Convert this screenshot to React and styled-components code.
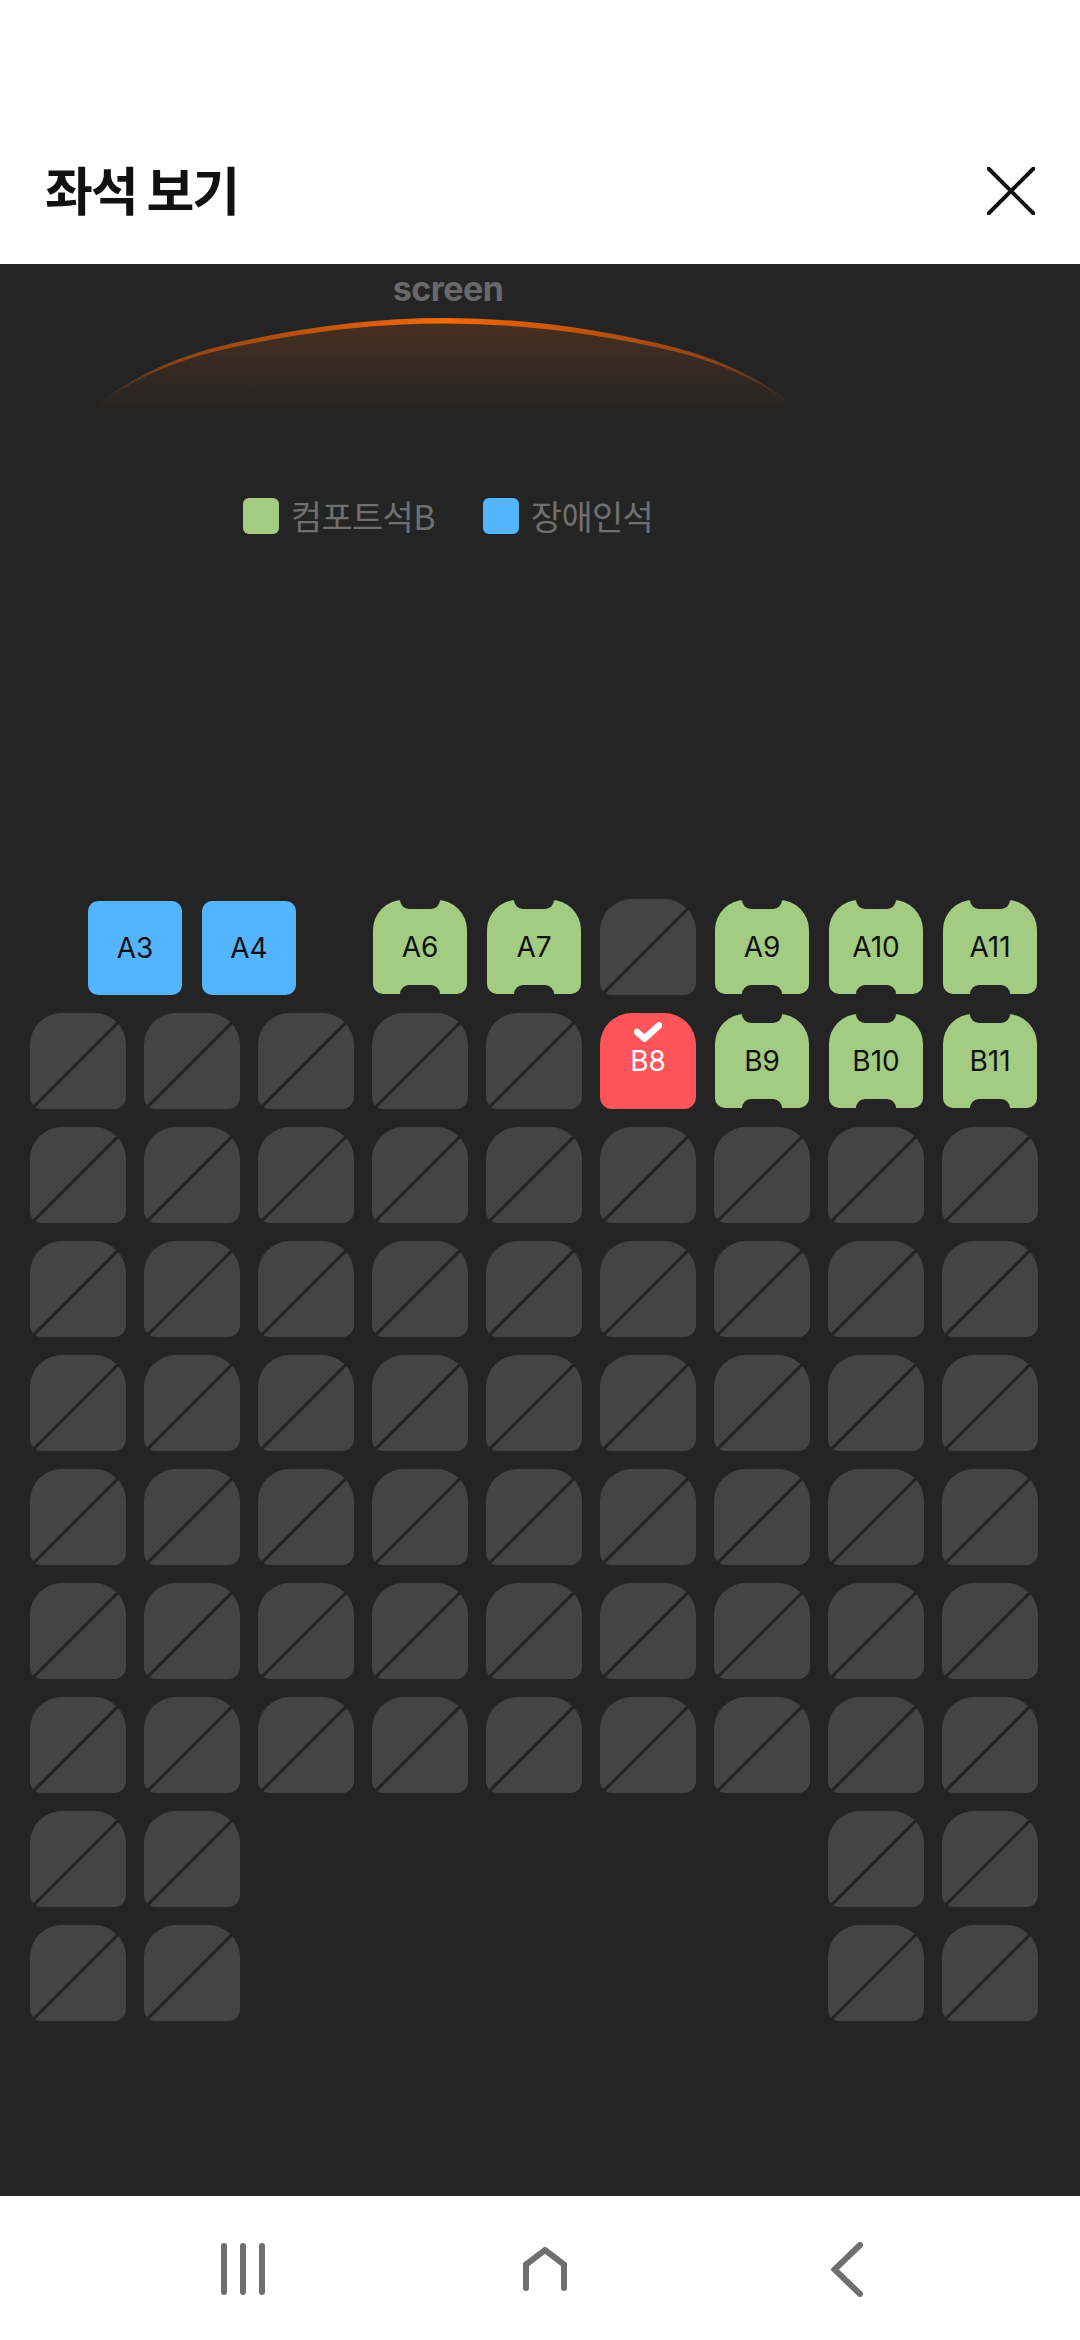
import styled, { createGlobalStyle } from 'styled-components';

const GlobalStyle = createGlobalStyle`
  html, body {
    margin: 0;
    padding: 0;
    background: #fff;
  }
  * {
    box-sizing: border-box;
  }
`;

const BG = '#242424';

const seatRows = [
  ['gap', 'b:A3', 'b:A4', 'gap', 'g:A6', 'g:A7', 'x', 'g:A9', 'g:A10', 'g:A11'],
  ['x', 'x', 'x', 'x', 'x', 'r:B8', 'g:B9', 'g:B10', 'g:B11'],
  Array(9).fill('x'),
  Array(9).fill('x'),
  Array(9).fill('x'),
  Array(9).fill('x'),
  Array(9).fill('x'),
  Array(9).fill('x'),
  ['x', 'x', 'none', 'none', 'none', 'none', 'none', 'x', 'x'],
  ['x', 'x', 'none', 'none', 'none', 'none', 'none', 'x', 'x'],
];

function Seat({ code }) {
  if (code === 'gap') return <HalfGap />;
  if (code === 'none') return <Slot />;
  if (code === 'x') {
    return (
      <Slot>
        <SoldSeat />
      </Slot>
    );
  }

  const [type, label] = code.split(':');

  return (
    <Slot>
      {type === 'b' && <AccessibleSeat>{label}</AccessibleSeat>}
      {type === 'g' && <ComfortSeat>{label}</ComfortSeat>}
      {type === 'r' && (
        <SelectedSeat>
          <CheckMark viewBox='0 0 28 20'>
            <path d='M3 10 L10.5 16.5 L25 3.5' />
          </CheckMark>
          {label}
        </SelectedSeat>
      )}
    </Slot>
  );
}

function App() {
  return (
    <Page>
      <GlobalStyle />
      <Header>
        <Title>좌석 보기</Title>
        <CloseIcon viewBox='0 0 48 48'>
          <path d='M1.5 1.5 L46.5 46.5 M46.5 1.5 L1.5 46.5' />
        </CloseIcon>
      </Header>

      <Hall>
        <Stage>
          <ScreenLabel>screen</ScreenLabel>
          <ScreenGlow viewBox='0 0 730 100'>
            <defs>
              <linearGradient id='arcStroke' x1='0' y1='0' x2='1' y2='0'>
                <stop offset='0' stopColor='#e8600a' stopOpacity='0.05' />
                <stop offset='0.1' stopColor='#e8600a' stopOpacity='0.45' />
                <stop offset='0.28' stopColor='#e8600a' stopOpacity='0.7' />
                <stop offset='0.5' stopColor='#f56a08' stopOpacity='1' />
                <stop offset='0.72' stopColor='#e8600a' stopOpacity='0.7' />
                <stop offset='0.9' stopColor='#e8600a' stopOpacity='0.45' />
                <stop offset='1' stopColor='#e8600a' stopOpacity='0.05' />
              </linearGradient>
              <linearGradient id='arcFill' x1='0' y1='0' x2='0' y2='1'>
                <stop offset='0' stopColor='#e8600a' stopOpacity='0.19' />
                <stop offset='1' stopColor='#e8600a' stopOpacity='0' />
              </linearGradient>
            </defs>
            <path d='M12 92 Q60 52 130 33 Q250 3 362 3 Q474 3 594 33 Q664 52 712 92 L712 99 L12 99 Z' fill='url(#arcFill)' />
            <GlowEdge
              d='M12 92 Q60 52 130 33 Q250 3 362 3 Q474 3 594 33 Q664 52 712 92 Q664 55 594 37 Q474 8.5 362 8.5 Q250 8.5 130 37 Q60 55 12 92 Z'
              fill='url(#arcStroke)'
            />
          </ScreenGlow>
          <Legend>
            <LegendItem>
              <Swatch $color='#a3cb82' />
              컴포트석B
            </LegendItem>
            <LegendItem>
              <Swatch $color='#54b5ff' />
              장애인석
            </LegendItem>
          </Legend>
        </Stage>

        <SeatMap>
          {seatRows.map((row, rowIndex) => (
            <SeatRow key={rowIndex}>
              {row.map((code, seatIndex) => (
                <Seat key={seatIndex} code={code} />
              ))}
            </SeatRow>
          ))}
        </SeatMap>
      </Hall>

      <NavBar>
        <NavIcon viewBox='0 0 44 52' $width={44} $height={52}>
          <path d='M3 3 V49 M22 3 V49 M41 3 V49' />
        </NavIcon>
        <NavIcon viewBox='0 0 44 44' $width={44} $height={44}>
          <path d='M3 41 V17.5 L22 3 L41 17.5 V41' />
        </NavIcon>
        <NavIcon viewBox='0 0 32 55' $width={32} $height={55}>
          <path d='M29 3 L3.5 27.5 L29 52' />
        </NavIcon>
      </NavBar>
    </Page>
  );
}

export default App;

const Page = styled.div`
  width: 1080px;
  height: 2340px;
  display: flex;
  flex-direction: column;
  overflow: hidden;
  background: #fff;
`;

const Header = styled.header`
  height: 264px;
  padding: 113px 45px 0 45px;
  display: flex;
  align-items: center;
  justify-content: space-between;
`;

const Title = styled.h1`
  margin: 0;
  font-family: 'Noto Sans CJK KR', 'Noto Sans', sans-serif;
  font-size: 52px;
  font-weight: 700;
  letter-spacing: -2px;
  color: #111;
`;

const CloseIcon = styled.svg`
  width: 48px;
  height: 48px;
  margin-top: 5px;
  stroke: #111;
  stroke-width: 4;
  stroke-linecap: round;
  fill: none;
`;

const Hall = styled.main`
  flex: 1;
  background: ${BG};
  display: flex;
  flex-direction: column;
`;

const Stage = styled.section`
  width: 896px;
  height: 635px;
  display: flex;
  flex-direction: column;
  align-items: center;
`;

const ScreenLabel = styled.div`
  margin-top: 7px;
  height: 36px;
  line-height: 36px;
  font-family: Inter, 'Noto Sans', sans-serif;
  font-size: 34px;
  font-weight: 700;
  letter-spacing: -0.5px;
  color: #686868;
`;

const ScreenGlow = styled.svg`
  margin-top: 8px;
  width: 730px;
  height: 100px;
`;

const GlowEdge = styled.path`
  filter: blur(0.7px);
`;

const Legend = styled.div`
  margin-top: 83px;
  display: flex;
  gap: 48px;
`;

const LegendItem = styled.div`
  display: flex;
  align-items: center;
  gap: 12px;
  height: 36px;
  margin-top: -1px;
  font-family: 'Noto Sans CJK KR', 'Noto Sans', sans-serif;
  font-size: 34px;
  letter-spacing: -0.7px;
  color: #6f6f6f;
`;

const Swatch = styled.span`
  width: 36px;
  height: 36px;
  border-radius: 6px;
  margin-top: 2px;
  background: ${({ $color }) => $color};
`;

const SeatMap = styled.section`
  padding-left: 30px;
  display: flex;
  flex-direction: column;
  gap: 18px;
`;

const SeatRow = styled.div`
  display: flex;
  gap: 18px;
`;

const Slot = styled.div`
  width: 96px;
  height: 96px;
  display: flex;
  align-items: center;
  justify-content: center;
`;

const HalfGap = styled.div`
  width: 39px;
`;

const SoldSeat = styled.div`
  width: 96px;
  height: 96px;
  border-radius: 32px 32px 12px 12px;
  background: linear-gradient(
    135deg,
    #444 calc(50.8% - 2px),
    ${BG} calc(50.8% - 1.2px),
    ${BG} calc(50.8% + 1.2px),
    #444 calc(50.8% + 2px)
  );
`;

const LabelSeat = styled.div`
  display: flex;
  align-items: center;
  justify-content: center;
  font-family: Inter, 'Noto Sans', sans-serif;
  font-size: 28px;
  font-weight: 400;
  color: #111;
`;

const AccessibleSeat = styled(LabelSeat)`
  width: 94px;
  height: 94px;
  align-self: flex-end;
  border-radius: 10px;
  background: #54b5ff;
`;

const ComfortSeat = styled(LabelSeat)`
  position: relative;
  width: 94px;
  height: 94px;
  border-radius: 30px 30px 10px 10px;
  background: #a3cb82;

  &::before,
  &::after {
    content: '';
    position: absolute;
    left: 27px;
    width: 40px;
    height: 9px;
    background: ${BG};
  }

  &::before {
    top: 0;
    border-radius: 0 0 9px 9px;
  }

  &::after {
    bottom: 0;
    border-radius: 9px 9px 0 0;
  }
`;

const SelectedSeat = styled(LabelSeat)`
  position: relative;
  width: 96px;
  height: 96px;
  border-radius: 32px 32px 12px 12px;
  background: #ff5459;
  color: #fff;
`;

const CheckMark = styled.svg`
  position: absolute;
  top: 9px;
  left: 34px;
  width: 28px;
  height: 20px;
  fill: none;
  stroke: #fff;
  stroke-width: 6.5;
  stroke-linecap: round;
  stroke-linejoin: round;
`;

const NavBar = styled.nav`
  height: 144px;
  flex-shrink: 0;
  padding: 2px 0 0 92px;
  display: grid;
  grid-template-columns: repeat(3, 302px);
  align-items: center;
  justify-items: center;
  background: #fff;
`;

const NavIcon = styled.svg`
  width: ${({ $width }) => $width}px;
  height: ${({ $height }) => $height}px;
  fill: none;
  stroke: #6f6f6f;
  stroke-width: 6;
  stroke-linecap: round;
  stroke-linejoin: miter;
`;
